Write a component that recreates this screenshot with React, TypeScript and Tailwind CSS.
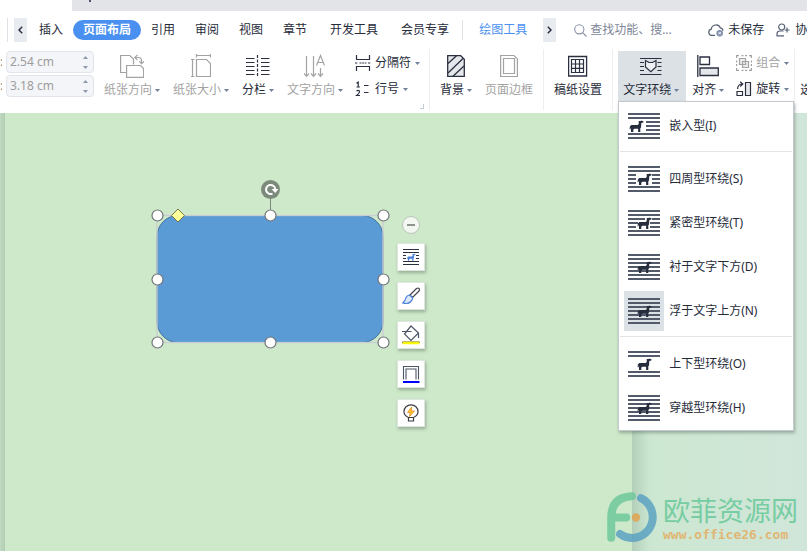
import React from "react";
import type { ReactNode } from "react";

const INK = "#2b3040";
const MUTED = "#a3a3a3";

function Caret() {
  return (
    <svg width="5" height="3" viewBox="0 0 5 3" className="shrink-0" aria-hidden="true">
      <path d="M0 0h5L2.5 3z" fill="#71809c" />
    </svg>
  );
}

/* ---------- ribbon icons ---------- */

function OrientationIcon() {
  return (
    <svg width="24" height="24" viewBox="0 0 24 24" fill="none" stroke={MUTED} strokeWidth="1.2">
      <path d="M6 18.5H.6V1.5h9.2L13.500 5V10.500" />
      <path d="M6.600 11.500h14l3 3V23.400h-17z" />
      <path d="M15 3.500h3.500q3 0 3 3V9.500M17.500 .8L14.800 3.500l2.700 2.700M19.200 7.300l2.400 2.400L24 7.300" />
    </svg>
  );
}

function PaperSizeIcon() {
  return (
    <svg width="20" height="24" viewBox="0 0 20 24" fill="none" stroke={MUTED} strokeWidth="1.2">
      <path d="M5.500 1.500h14M5.500 0v3.500M19.400 0v3.500M1.500 5.500v17M0 5.500h3.500M0 22.500h3.500M5.500 5.500h10l4 4v13h-14z" />
    </svg>
  );
}

function ColumnsIcon() {
  return (
    <svg width="24" height="24" viewBox="0 0 24 24" fill="none" stroke={INK} strokeWidth="1.2">
      <path d="M0 4.500h8.500M0 8.500h8.500M0 12.500h8.500M0 16.500h8.500M0 20.500h8.500M15 4.500h8.500M15 8.500h8.500M15 12.500h8.500M15 16.500h8.500M15 20.500h8.500" />
      <path d="M11.500 1v22" strokeDasharray="3 1.500" />
    </svg>
  );
}

function TextDirectionIcon() {
  return (
    <svg width="22" height="24" viewBox="0 0 22 24" fill="none" stroke={MUTED} strokeWidth="1.2">
      <path d="M2.500 2v20M0 19.500L2.500 22.300 5 19.500M9.500 2v20M7 19.500l2.500 2.800 2.500-2.800M16.500 14v8M14 19.500l2.500 2.800 2.500-2.800" />
      <path d="M12.500 11.500L16.500 1.500l4 10M14 8.500h5" />
    </svg>
  );
}

function BackgroundIcon() {
  return (
    <svg width="18" height="24" viewBox="0 0 18 24" fill="none" stroke={INK} strokeWidth="1.300">
      <path d="M.7 1.700h13L17.300 5.200v17.100H.7z" fill="#e5e7eb" />
      <path d="M1 9.500L9.500 1.700M1 19L16 4.500M6 22.300L17 12" />
    </svg>
  );
}

function PageBorderIcon() {
  return (
    <svg width="18" height="24" viewBox="0 0 18 24" fill="none" stroke={MUTED} strokeWidth="1.200">
      <path d="M.6 1.500h13.400l3.400 3.400v17.600H.6zM3.500 4.500h11v15h-11z" />
    </svg>
  );
}

function ManuscriptIcon() {
  return (
    <svg width="20" height="24" viewBox="0 0 20 24" fill="none" stroke={INK} strokeWidth="1.200">
      <path d="M.6 2.500h18v19.500H.6z" strokeWidth="1.300" />
      <path d="M3.500 5.500h12v13h-12zM3.500 10h12M3.500 14.300h12M7.500 5.500v4M11.500 5.500v4M7.500 10v4M11.500 10v4M7.500 14.500v4M11.500 14.500v4" />
    </svg>
  );
}

function WrapIcon() {
  return (
    <svg width="22" height="24" viewBox="0 0 22 24" fill="none" stroke={INK} strokeWidth="1.200">
      <path d="M0 4.500h21.500M0 20.500h21.500M0 8.500h4M0 12.500h4M0 16.500h4M17.500 8.500h4M17.500 12.500h4M17.500 16.500h4" />
      <path d="M5.500 6.500l3.500 2h3.500l3.500-2v6.500l-5.200 4.800L5.500 13z" fill="#eef0f3" />
    </svg>
  );
}

function AlignIcon() {
  return (
    <svg width="22" height="24" viewBox="0 0 22 24" fill="none" stroke={INK} strokeWidth="1.300">
      <path d="M.8 1v22M3 3h9.500v7.500H3z" />
      <path d="M3 14h18.300v7.500H3z" fill="#e5e7eb" />
    </svg>
  );
}

function SectionBreakIcon() {
  return (
    <svg width="16" height="16" viewBox="0 0 16 16" fill="none" stroke={INK} strokeWidth="1.200">
      <path d="M1.500 0v4.500h13V0M1.500 16v-4.500h13V16" />
      <path d="M0 8h3M13 8h3M4.500 8h7" strokeDasharray="2 .7" />
    </svg>
  );
}

function LineNumberIcon() {
  return (
    <svg width="16" height="16" viewBox="0 0 16 16" fill="none" stroke={INK} strokeWidth="1.200">
      <path d="M1.500 2.300L3.200 1.200V6M1.500 6h3.400M1.500 10.200q1.600-1.600 3 0q.4 1.300-2.900 4.300H5M9 4.500h4.500M9 11.500h4.500" />
    </svg>
  );
}

function GroupIcon() {
  return (
    <svg width="16" height="16" viewBox="0 0 16 16" fill="none" stroke={MUTED} strokeWidth="1.200">
      <path d="M3.500 3.500h6v6h-6zM6.500 6.500h6v6h-6z" fill="#ececec" />
      <path d="M.6 3V.6H3M13 .6h2.400V3M15.400 13v2.400H13M3 15.400H.6V13M5.500 .6h2M9 .6h2M5.500 15.400h2M9 15.400h2M.6 5.500v2M.6 9v2M15.400 5.500v2M15.400 9v2" />
    </svg>
  );
}

function RotateIcon() {
  return (
    <svg width="16" height="16" viewBox="0 0 16 16" fill="none" stroke={INK} strokeWidth="1.200">
      <path d="M9.500 1.500h5v13h-5z" fill="#e5e7eb" />
      <path d="M1 10.500h5.500v4H1zM1.600 8q0-5 5-5M4.200 .7L6.800 3 4.200 5.500" />
    </svg>
  );
}

/* ---------- wrap-style icons of the menu ---------- */

type WrapKind = "inline" | "square" | "tight" | "behind" | "front" | "topBottom" | "through";

const middleLines: Record<WrapKind, string> = {
  inline: "M18 9h14M18 13h14M18 17h14",
  square: "M0 9h8M0 13h8M0 17h8M24 9h8M24 13h8M24 17h8",
  tight: "M0 9h17M0 13h10M0 17h8M24 9h8M22 13h10M22 17h10",
  behind: "M0 9h32M0 13h32M0 17h32",
  front: "M0 9h32M0 13h32M0 17h32",
  topBottom: "",
  through: "M0 9h32M0 13h32M0 17h32",
};

function DogShape({ fill }: { fill: string }) {
  return (
    <path
      fill={fill}
      d="M9.200 1L11.800 .9 12.200 .2 12.800 1 14 1.200 13.800 2.600 11.800 3 11.500 7.500 10.800 8.300V12H8.600V8.800H5L3.800 9.600V12H1.500V9.300L1.200 7.600 .9 9.300 0 9.300.4 6.500 1.800 5H8.300L9.300 3.800z"
    />
  );
}

function WrapStyleIcon({ kind }: { kind: WrapKind }) {
  return (
    <svg width="32" height="26" viewBox="0 0 32 26" className="shrink-0" aria-hidden="true">
      <path
        d={"M0 1h32M0 5h32M0 21h32M0 25h32" + middleLines[kind]}
        stroke="#535a69"
        strokeWidth="2"
        fill="none"
      />
      <g transform={kind === "inline" ? "translate(1.500 7)" : "translate(9.500 7)"}>
        <DogShape fill="#262d3d" />
      </g>
    </svg>
  );
}

/* ---------- ribbon building blocks ---------- */

type ToolProps = { icon: ReactNode; label: string; caret?: boolean; muted?: boolean; active?: boolean };

function Tool({ icon, label, caret = true, muted = false, active = false }: ToolProps) {
  return (
    <button
      type="button"
      className={
        "flex h-[50px] shrink-0 flex-col items-center gap-[3px] whitespace-nowrap pl-[5px] pt-[3px] " +
        (caret ? "pr-[7px] " : "pr-[5px] ") +
        (active ? "bg-[#dce1e6] " : "") +
        (muted ? "text-[#a3a3a3]" : "text-[#262b3a]")
      }
    >
      {icon}
      <span className="flex items-center gap-[3px] leading-[18px]">
        {label}
        {caret && <Caret />}
      </span>
    </button>
  );
}

function SmallTool({ icon, label, muted = false }: ToolProps) {
  return (
    <button
      type="button"
      className={
        "flex h-5 items-center gap-1 whitespace-nowrap leading-[18px] " +
        (muted ? "text-[#a3a3a3]" : "text-[#262b3a]")
      }
    >
      {icon}
      {label}
      <Caret />
    </button>
  );
}

function Divider() {
  return <div className="mx-[5px] h-[61px] w-px shrink-0 bg-[#eceef1]" />;
}

function MarginField({ id, value }: { id: string; value: string }) {
  return (
    <div className="flex items-center gap-1">
      <label htmlFor={id} className="w-0.5 overflow-hidden text-[#8a8a8a]">
        :
      </label>
      <div className="flex h-[22px] w-[88px] items-center rounded-sm border border-[#e1e4ea] bg-[#f4f5f8] pl-[3px] pr-[5px]">
        <input
          id={id}
          defaultValue={value}
          className="w-full min-w-0 bg-transparent text-[12px] text-[#9d9d9d] outline-none"
        />
        <div className="flex flex-col gap-[7px]">
          <button type="button" aria-label="增加" className="block h-[3px]">
            <svg width="5" height="3" viewBox="0 0 5 3" className="block">
              <path d="M0 3h5L2.500 0z" fill="#8e99ad" />
            </svg>
          </button>
          <button type="button" aria-label="减少" className="block h-[3px]">
            <svg width="5" height="3" viewBox="0 0 5 3" className="block">
              <path d="M0 0h5L2.500 3z" fill="#8e99ad" />
            </svg>
          </button>
        </div>
      </div>
    </div>
  );
}

function TabBar() {
  const tabs = ["插入", "页面布局", "引用", "审阅", "视图", "章节", "开发工具", "会员专享"];
  return (
    <nav className="flex h-[38px] items-center overflow-hidden whitespace-nowrap pl-[7px] text-[#262b3a]">
      <div className="mr-1.5 h-6 w-px shrink-0 bg-[#dfe2e7]" />
      <button type="button" aria-label="向左" className="mr-0.5 flex h-6 w-[13px] shrink-0 items-center justify-center bg-[#e8ebef]">
        <svg width="5" height="8" viewBox="0 0 5 8" fill="none" stroke={INK} strokeWidth="1.500">
          <path d="M4.200 .8L1 4l3.200 3.200" />
        </svg>
      </button>
      {tabs.map((tab) => (
        <button
          key={tab}
          type="button"
          className={
            "h-5 shrink-0 rounded-full px-2.5 leading-5 " +
            (tab === "页面布局" ? "bg-[#4a90f0] font-bold text-white" : "") +
            (tab === "开发工具" || tab === "会员专享" ? "ml-[3px]" : "")
          }
        >
          {tab}
        </button>
      ))}
      <div className="ml-[3px] mr-1.5 h-5 w-px shrink-0 bg-[#dfe2e7]" />
      <button type="button" className="h-5 shrink-0 px-2.5 leading-5 text-[#4a90f0]">
        绘图工具
      </button>
      <button type="button" aria-label="向右" className="ml-1.5 flex h-6 w-[13px] shrink-0 items-center justify-center bg-[#e8ebef]">
        <svg width="5" height="8" viewBox="0 0 5 8" fill="none" stroke={INK} strokeWidth="1.500">
          <path d="M.8 .8L4 4 .8 7.200" />
        </svg>
      </button>
      <label className="ml-[18px] flex shrink-0 items-center gap-[3px]">
        <svg width="13" height="13" viewBox="0 0 13 13" fill="none" stroke="#8792a6" strokeWidth="1.100">
          <circle cx="5.300" cy="5.300" r="4.600" />
          <path d="M8.700 8.700l3.800 3.800" />
        </svg>
        <input
          aria-label="查找功能"
          placeholder="查找功能、搜..."
          className="w-[100px] bg-transparent outline-none placeholder:text-[#7e8798]"
        />
      </label>
      <button type="button" className="ml-[18px] flex shrink-0 items-center gap-1">
        <svg width="16" height="14" viewBox="0 0 16 14" fill="none" stroke="#566174" strokeWidth="1.200">
          <path d="M7 12.400H3.700a3.200 3.200 0 0 1-.4-6.300A4.700 4.700 0 0 1 12.300 4.800q2.600 .6 2.700 3" />
          <circle cx="11.700" cy="10.200" r="3.300" fill="#8390ae" stroke="none" />
          <path d="M10.500 9l2.400 2.400M12.900 9l-2.400 2.400" stroke="#fff" strokeWidth=".9" />
        </svg>
        未保存
      </button>
      <button type="button" className="ml-3 flex shrink-0 items-center gap-[5px]">
        <svg width="14" height="14" viewBox="0 0 14 14" fill="none" stroke="#566174" strokeWidth="1.200">
          <circle cx="5.700" cy="4" r="3" />
          <path d="M8 12.800H1V11q0-3 3-3h3.500M11 4.500v5M8.500 7h5" />
        </svg>
        协
      </button>
    </nav>
  );
}

const menuGroups: { kind: WrapKind; label: string }[][] = [
  [{ kind: "inline", label: "嵌入型(I)" }],
  [
    { kind: "square", label: "四周型环绕(S)" },
    { kind: "tight", label: "紧密型环绕(T)" },
    { kind: "behind", label: "衬于文字下方(D)" },
    { kind: "front", label: "浮于文字上方(N)" },
  ],
  [
    { kind: "topBottom", label: "上下型环绕(O)" },
    { kind: "through", label: "穿越型环绕(H)" },
  ],
];

function WrapMenu() {
  return (
    <div
      role="menu"
      className="absolute left-0 top-full z-10 w-44 border border-[#c3c9cf] bg-white px-px pt-0.5 text-[#262b3a] shadow-[1px_2px_3px_rgba(60,80,70,0.4)]"
    >
      {menuGroups.map((group, index) => (
        <div key={index} role="group">
          {index > 0 && <div className="mb-[5px] mt-[3px] h-px bg-[#e2e4e8]" />}
          {group.map((item) => (
            <button
              key={item.kind}
              type="button"
              role="menuitem"
              className="flex h-11 w-full items-center gap-[5px] whitespace-nowrap pl-1"
            >
              <span
                className={
                  "flex size-10 items-center justify-center " + (item.kind === "front" ? "bg-[#dce1e6]" : "")
                }
              >
                <WrapStyleIcon kind={item.kind} />
              </span>
              {item.label}
            </button>
          ))}
        </div>
      ))}
    </div>
  );
}

function Ribbon() {
  return (
    <div className="flex h-16 items-start whitespace-nowrap">
      <div className="mr-[5px] flex shrink-0 flex-col gap-0.5 pt-0.5">
        <MarginField id="margin-top" value="2.54 cm" />
        <MarginField id="margin-left" value="3.18 cm" />
      </div>
      <div className="flex shrink-0 gap-px pt-0.5">
        <Tool icon={<OrientationIcon />} label="纸张方向" muted />
        <Tool icon={<PaperSizeIcon />} label="纸张大小" muted />
        <Tool icon={<ColumnsIcon />} label="分栏" />
        <Tool icon={<TextDirectionIcon />} label="文字方向" muted />
      </div>
      <div className="flex shrink-0 flex-col items-start gap-1.5 pl-[5px] pt-1">
        <SmallTool icon={<SectionBreakIcon />} label="分隔符" />
        <SmallTool icon={<LineNumberIcon />} label="行号" />
      </div>
      <button type="button" aria-label="页面设置" className="mt-[55px] h-[5px] w-1 shrink-0 border-b border-r border-[#c3cad6]" />
      <Divider />
      <div className="flex shrink-0 gap-px pt-0.5">
        <Tool icon={<BackgroundIcon />} label="背景" />
        <Tool icon={<PageBorderIcon />} label="页面边框" caret={false} muted />
      </div>
      <Divider />
      <div className="flex shrink-0 pt-0.5">
        <Tool icon={<ManuscriptIcon />} label="稿纸设置" caret={false} />
      </div>
      <Divider />
      <div className="flex shrink-0 gap-px pt-0.5">
        <div className="relative">
          <Tool icon={<WrapIcon />} label="文字环绕" active />
          <WrapMenu />
        </div>
        <Tool icon={<AlignIcon />} label="对齐" />
      </div>
      <div className="flex shrink-0 flex-col items-start gap-1.5 pl-[5px] pt-1">
        <SmallTool icon={<GroupIcon />} label="组合" muted />
        <SmallTool icon={<RotateIcon />} label="旋转" />
      </div>
      <Divider />
      <div className="flex min-w-0 flex-1 overflow-hidden pt-8">
        <button type="button" className="leading-[18px] text-[#262b3a]">
          选
        </button>
      </div>
    </div>
  );
}

/* ---------- document canvas ---------- */

function SelectedShape() {
  const handles = [
    [10, 35],
    [123, 35],
    [236, 35],
    [10, 99],
    [236, 99],
    [10, 162],
    [123, 162],
    [236, 162],
  ];
  return (
    <svg width="246" height="172" viewBox="0 0 246 172" className="absolute left-[147px] top-[67px]" aria-label="圆角矩形">
      <rect x="10" y="35.500" width="226" height="127" rx="21" fill="#5b9bd5" stroke="#41719c" />
      <rect x="10" y="35.500" width="226" height="127" fill="none" stroke="#c9ced3" strokeWidth="1.300" />
      <path d="M123.500 18v12" stroke="#7b8a7b" />
      <circle cx="123.500" cy="9.500" r="9.500" fill="#7b8a7b" />
      <path d="M125.500 13.700a4.600 4.600 0 1 1 2.700-4.700" fill="none" stroke="#fff" strokeWidth="2" />
      <path d="M124.500 9h7l-3.300 4z" fill="#fff" />
      {handles.map(([x, y]) => (
        <circle key={`${x}-${y}`} cx={x + 0.5} cy={y + 0.5} r="5.500" fill="#fff" stroke="#70757a" strokeWidth="1.200" />
      ))}
      <path d="M31 29l6.500 6.500L31 42l-6.500-6.500z" fill="#ffff99" stroke="#77774f" />
    </svg>
  );
}

function LayoutOptionsIcon() {
  return (
    <svg width="18" height="18" viewBox="0 0 18 18" fill="none" stroke="#2b3040" strokeWidth="1.200">
      <path d="M1 1.500h16M1 4.500h16M1 7.500h3M1 10.500h3M14 7.500h3M14 10.500h3M1 13.500h16M1 16.500h16" />
      <g transform="translate(5 5.500) scale(.6)" stroke="none">
        <DogShape fill="#4a80d8" />
      </g>
    </svg>
  );
}

function BrushIcon() {
  return (
    <svg width="18" height="18" viewBox="0 0 18 18" fill="none" strokeWidth="1.200">
      <path d="M8 8l6.500-6.500q1.500-1 2.500 0t0 2.500L10.500 10.500z" stroke="#44444c" fill="#fff" />
      <path d="M7.500 8q-2.500 .3-3.500 2.500Q3.500 13.500 .8 16q5.500 1.500 8-1.500 2-1.800 1.700-3.800z" stroke="#4a80d8" fill="#dbe7fb" />
    </svg>
  );
}

function FillIcon() {
  return (
    <svg width="18" height="20" viewBox="0 0 18 20" fill="none" stroke="#4d5566" strokeWidth="1.200">
      <path d="M9 1l7.500 7L9 15.500 2.500 9zM0 6.500h9.500M16.500 8v5" />
      <path d="M.5 18h17" stroke="#ffff00" strokeWidth="2.500" />
      <path d="M.5 18.500V16.700h17v1.300" stroke="#8b8b3d" strokeWidth=".7" />
    </svg>
  );
}

function OutlineIcon() {
  return (
    <svg width="18" height="18" viewBox="0 0 18 18" fill="none" stroke="#4d5566" strokeWidth="1.100">
      <path d="M1.500 14.500V1.500h15v13M4 14.500V4h10v10.500" />
      <path d="M1 17h16.500" stroke="#0000ff" strokeWidth="2" />
    </svg>
  );
}

function IdeaIcon() {
  return (
    <svg width="16" height="18" viewBox="0 0 16 18" fill="none" stroke="#3d3d45" strokeWidth="1.200">
      <path d="M5.500 13.500q-4.500-2-4.500-6a7 6.700 0 0 1 14 0q0 4-4.500 6zM5.500 13.500V17h5v-3.500" />
      <path d="M8.500 3L4.500 8.500h2.700L6.500 12.500 11.500 7H8.700z" fill="#ffc52e" stroke="#e58a1e" strokeWidth=".8" />
    </svg>
  );
}

function FloatingToolbar() {
  const items: [string, ReactNode][] = [
    ["布局选项", <LayoutOptionsIcon />],
    ["形状样式", <BrushIcon />],
    ["形状填充", <FillIcon />],
    ["形状轮廓", <OutlineIcon />],
    ["设计创意", <IdeaIcon />],
  ];
  return (
    <div className="absolute left-[397px] top-[103px] flex flex-col items-center gap-[11px]">
      <button
        type="button"
        aria-label="收起"
        className="-mb-0.5 flex size-[18px] items-center justify-center rounded-full border border-[#bcc4bc] bg-[#f2f7f1]"
      >
        <span className="h-0.5 w-2 bg-[#8d958d]" />
      </button>
      {items.map(([label, icon]) => (
        <button
          key={label}
          type="button"
          aria-label={label}
          className="flex size-7 items-center justify-center border border-[#dfe5df] bg-white shadow-[1px_2px_3px_rgba(70,90,70,0.4)]"
        >
          {icon}
        </button>
      ))}
    </div>
  );
}

function Watermark() {
  return (
    <div className="absolute bottom-[9px] right-[9px] flex items-center gap-1.5 opacity-80">
      <svg width="50" height="50" viewBox="0 0 50 50" fill="none" strokeWidth="8" strokeLinecap="round">
        <path d="M25 4.200Q4.200 5 4.200 26v19.800M4.200 25.500h15" stroke="#69c79a" />
        <path d="M34 6.200a21 21 0 0 1-8 39.800q-7 .3-13-4" stroke="#559fc2" />
        <circle cx="29" cy="25.500" r="4.200" fill="#e5a04a" />
      </svg>
      <div className="flex flex-col">
        <span className="font-['Noto_Sans_CJK_SC',sans-serif] text-[27px] leading-[36px] text-[#62c796]">欧菲资源网</span>
        <span className="font-['DejaVu_Sans_Mono',monospace] text-[13px] font-bold leading-[14px] text-[#e5ab5c]">
          www.office26.com
        </span>
      </div>
    </div>
  );
}

export default function App() {
  return (
    <div className="flex min-h-screen flex-col overflow-hidden bg-white font-['Noto_Sans','Noto_Sans_CJK_SC',sans-serif] text-[12px]">
      <header>
        <div className="flex h-[11px]">
          <div className="w-[72px] bg-white" />
          <div className="flex-1 bg-[#e2e4e8] pl-[17px]">
            <div className="h-0.5 w-0.5 bg-[#4d5566]" />
          </div>
        </div>
        <TabBar />
        <Ribbon />
      </header>
      <main className="relative flex flex-1 bg-[#cee8ca]">
        <div className="w-[5px] bg-linear-to-r from-[#bfdac0] to-[#b3cdb5]" />
        <div className="w-[627px] shrink-0 bg-[#cee8ca]" />
        <div className="flex-1 bg-linear-to-r from-[#b3cfb9] via-[#cce7d1] via-10% to-[#d1e6da]" />
        <SelectedShape />
        <FloatingToolbar />
        <Watermark />
      </main>
    </div>
  );
}
